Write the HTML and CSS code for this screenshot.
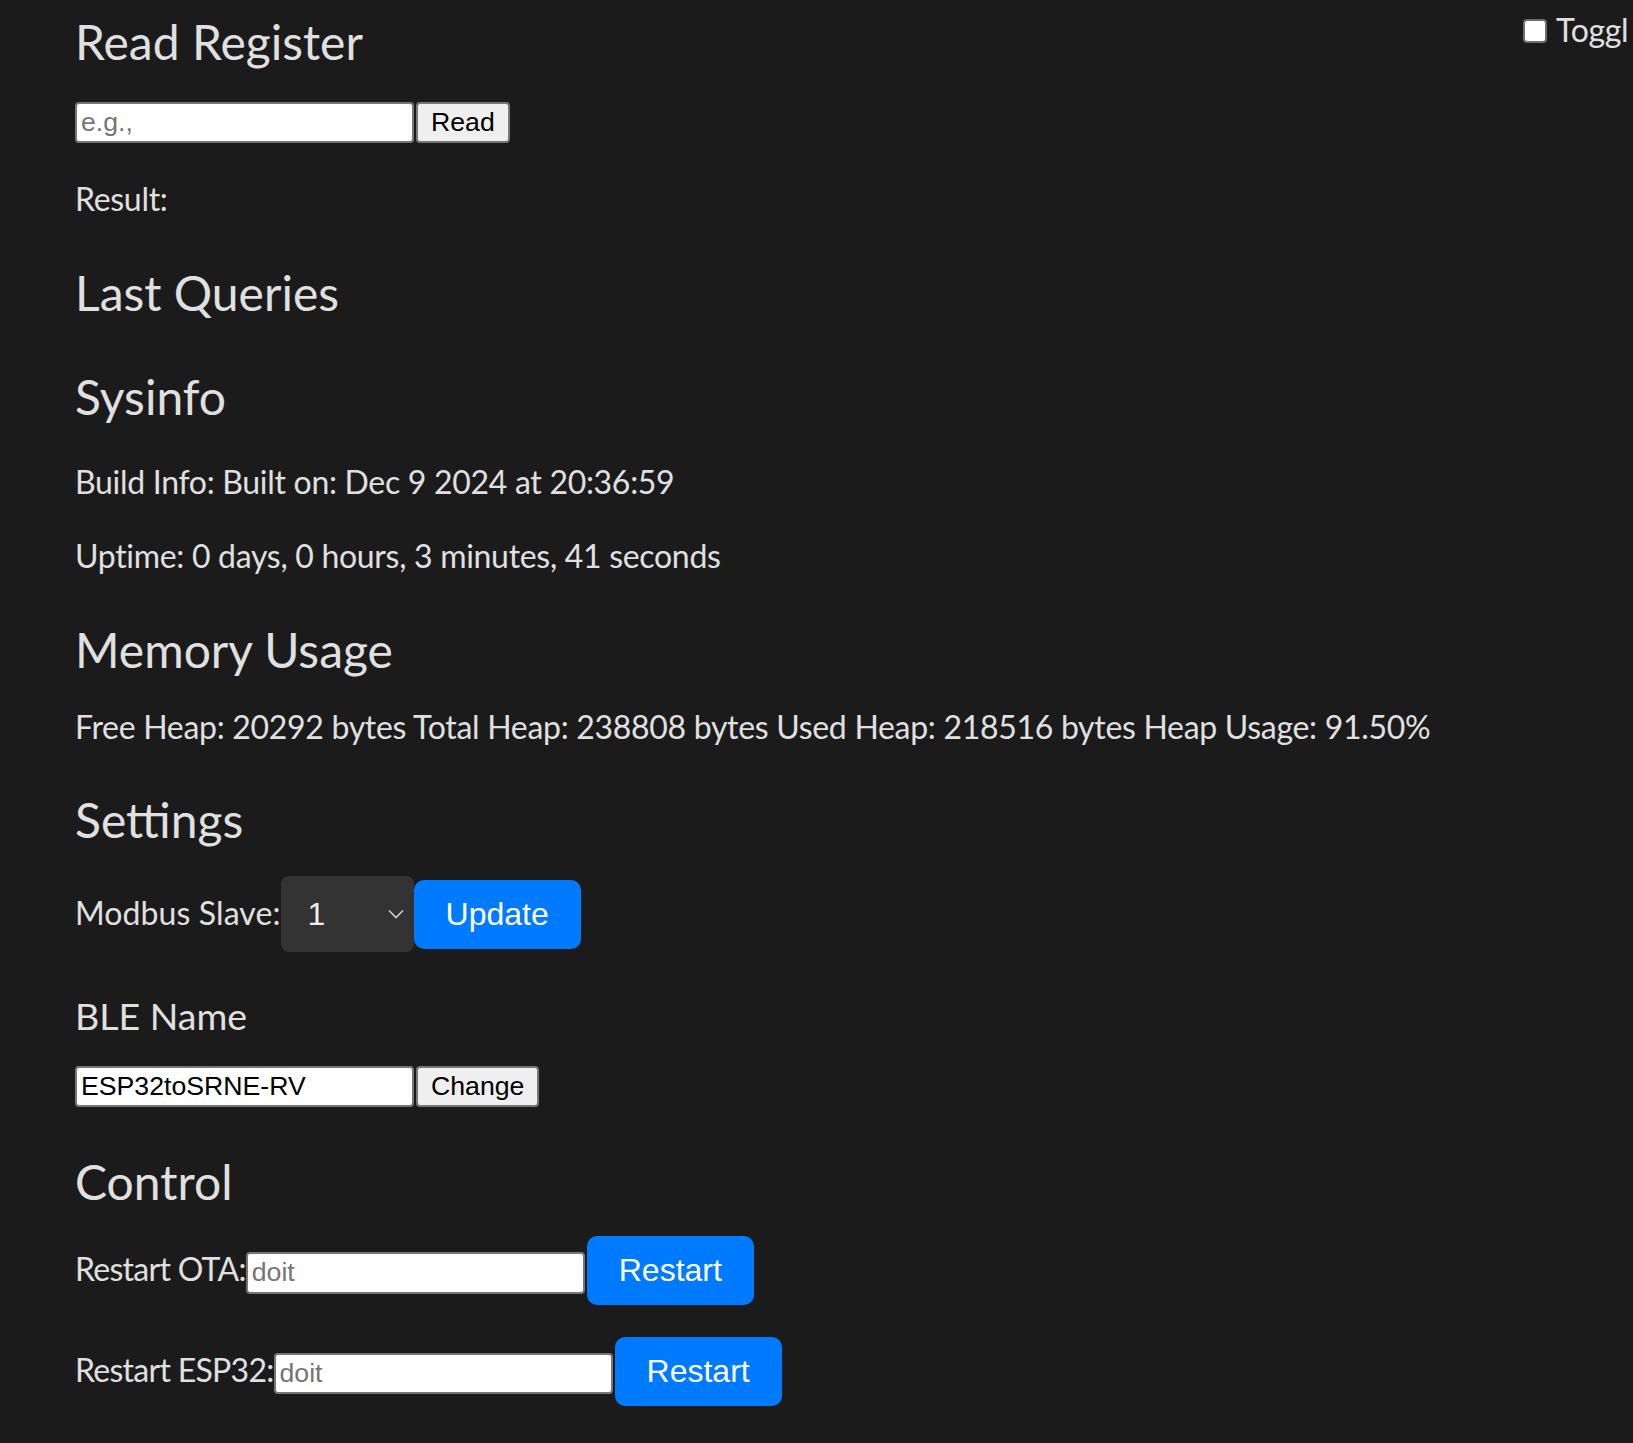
FILE: index.html
```html
<!DOCTYPE html>
<html lang="en">
<head>
<meta charset="utf-8">
<title>ESP32toSRNE</title>
<link rel="stylesheet" href="styles.css">
</head>
<body>
<label class="toggle"><input type="checkbox" class="toggle-box"><span class="toggle-text">Toggl</span></label>
<main class="page">
  <h2 class="first">Read Register</h2>
  <div class="row row-read"><input type="text" class="field" placeholder="e.g.,"><button class="btn" type="button">Read</button></div>
  <p>Result: </p>
  <h2>Last Queries</h2>
  <h2>Sysinfo</h2>
  <p>Build Info: Built on: Dec 9 2024 at 20:36:59</p>
  <p>Uptime: 0 days, 0 hours, 3 minutes, 41 seconds</p>
  <h2>Memory Usage</h2>
  <div class="mem">Free Heap: 20292 bytes Total Heap: 238808 bytes Used Heap: 218516 bytes Heap Usage: 91.50%</div>
  <h2>Settings</h2>
  <form class="form-row"><label class="lbl-wide">Modbus Slave:</label><span class="select-wrap"><select class="select"><option>1</option><option>2</option><option>3</option></select><svg class="chev" viewBox="0 0 16 10" width="16" height="10"><polyline points="1,1.5 8,8.5 15,1.5" fill="none" stroke="#cfcfcf" stroke-width="1.6"/></svg></span><button class="btn-primary" type="button">Update</button></form>
  <h3>BLE Name</h3>
  <div class="row"><input type="text" class="field" value="ESP32toSRNE-RV"><button class="btn" type="button">Change</button></div>
  <h2 class="h-control">Control</h2>
  <form class="form-row"><label class="lbl-tight">Restart OTA:</label><input type="text" class="field" placeholder="doit"><button class="btn-primary" type="button">Restart</button></form>
  <form class="form-row"><label class="lbl-tight">Restart ESP32:</label><input type="text" class="field" placeholder="doit"><button class="btn-primary" type="button">Restart</button></form>
</main>
</body>
</html>
```

FILE: styles.css
```css
html, body { margin: 0; }
body {
  background: #1b1b1b;
  color: #e0e0e0;
  font-family: Lato, "Open Sans", sans-serif;
  font-size: 32px;
  line-height: 42.5px;
  letter-spacing: -0.3px;
  overflow: hidden;
  min-height: 1443px;
}
.page { padding: 10px 0 0 75px; }
h2 { font-size: 48px; line-height: 64px; font-weight: 400; letter-spacing: 0; margin: 40px 0 24px; }
h2.first { margin-top: 0; }
h2.h-control { margin: 43px 0 22px; }
h3 { font-size: 37.5px; line-height: 50px; font-weight: 400; letter-spacing: 0; margin: 39.5px 0 20.7px; }
p { margin: 32px 0; }
.row { margin: 0; }
.row-read { margin-bottom: 35px; }
.form-row { margin: 0 0 32px; }
.mem { margin: 0; }
.lbl-wide { letter-spacing: 0.1px; }
.lbl-tight { letter-spacing: -0.72px; }

.toggle { position: absolute; left: 1523px; top: 8.5px; display: flex; align-items: flex-start; white-space: nowrap; }
.toggle-box { appearance: none; box-sizing: border-box; width: 24px; height: 24px; margin: 10.5px 9px 0 0; background: #fff; border: 2px solid #6e6e6e; border-radius: 4px; }

.field {
  box-sizing: border-box; width: 339px; height: 41.5px; margin: 0 2px 0 0; padding: 0 4px;
  border: 2px solid #767676; border-radius: 4px; background: #fff; color: #000;
  font: 26.67px "Liberation Sans", Arial, sans-serif; letter-spacing: 0;
}
.field::placeholder { color: #757575; }
.btn {
  box-sizing: border-box; height: 41.5px; padding: 0 13px; margin: 0;
  border: 2px solid #767676; border-radius: 4px; background: #efefef; color: #000;
  font: 26.67px "Liberation Sans", Arial, sans-serif; letter-spacing: 0;
}
.btn-primary {
  margin: 0; padding: 16px 32px; border: 0; border-radius: 10px; background: #007bff; color: #fff;
  font: 32px/36.8px "Liberation Sans", Arial, sans-serif; letter-spacing: 0;
}
.select-wrap { position: relative; display: inline-block; }
.select {
  appearance: none; box-sizing: border-box; width: 133px; height: 75.7px; margin: 0; padding: 0 0 0 27px;
  border: 0; border-radius: 8px; background: #333; color: #eee;
  font: 32px "Liberation Sans", Arial, sans-serif; letter-spacing: 0;
}
.chev { position: absolute; left: 107px; top: 33px; pointer-events: none; }
```
